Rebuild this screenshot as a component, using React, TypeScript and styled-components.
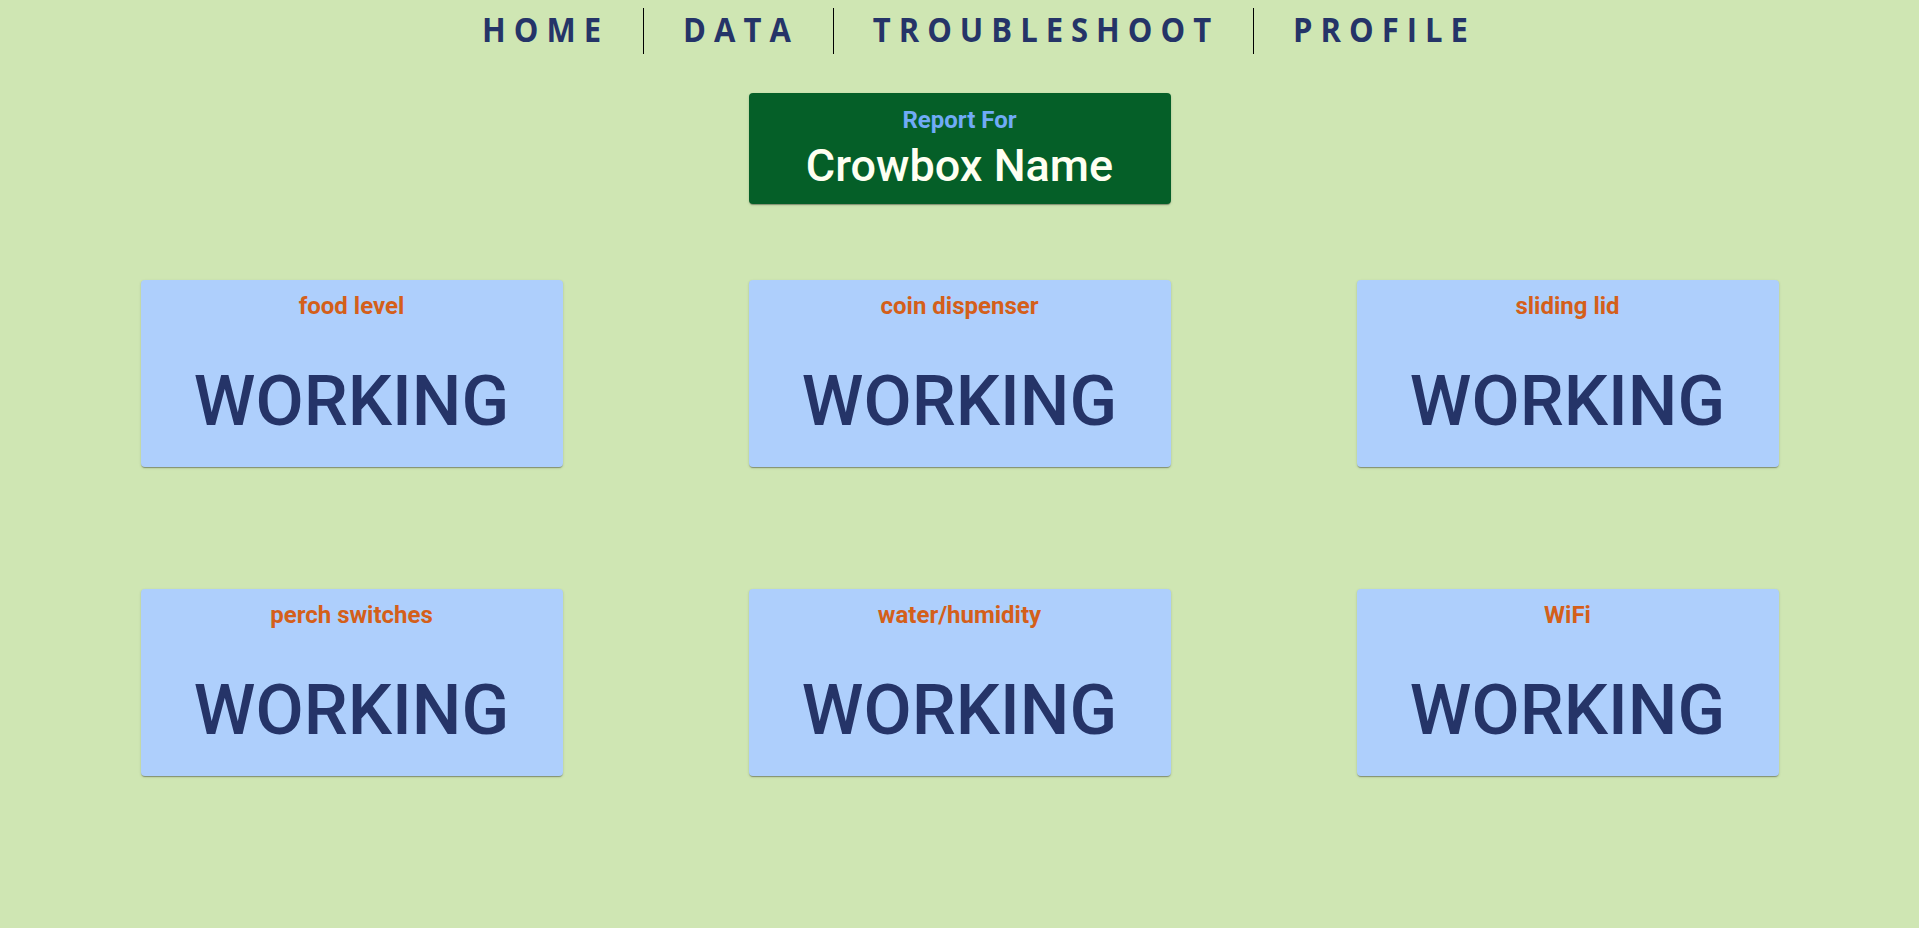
import styled, { createGlobalStyle } from 'styled-components';

const GlobalStyle = createGlobalStyle`
  body {
    margin: 0;
    background-color: #cfe6b3;
    font-family: Roboto, 'Noto Sans', sans-serif;
  }
`;

const Page = styled.div`
  min-height: 100vh;
  background-color: #cfe6b3;
`;

const NavBar = styled.nav`
  display: flex;
  justify-content: center;
  align-items: center;
  padding: 8px 0 0 34px;
`;

const NavItem = styled.a<{ $divider?: boolean }>`
  display: flex;
  align-items: center;
  height: 46px;
  padding: 0 34px 0 39px;
  border-left: ${(p) => (p.$divider ? '1px solid #000000' : 'none')};
  color: #253468;
  text-decoration: none;
  cursor: pointer;
`;

const NavText = styled.span`
  display: inline-block;
  font-family: 'Open Sans', sans-serif;
  font-weight: 700;
  font-size: 31px;
  letter-spacing: 8px;
  transform: translateY(-2px) scaleY(1.12);
`;

const ReportBox = styled.div`
  width: 422px;
  height: 111px;
  box-sizing: border-box;
  margin: 39px auto 0;
  padding-top: 13px;
  display: flex;
  flex-direction: column;
  align-items: center;
  background-color: #055f28;
  border-radius: 4px;
  box-shadow: 0 2px 1px -1px rgba(0, 0, 0, 0.2), 0 1px 1px 0 rgba(0, 0, 0, 0.14),
    0 1px 3px 0 rgba(0, 0, 0, 0.12);
`;

const ReportLabel = styled.div`
  font-size: 24px;
  font-weight: 700;
  line-height: 28px;
  color: #70abf6;
`;

const BoxName = styled.div`
  margin-top: 6px;
  font-size: 45px;
  font-weight: 500;
  line-height: 52px;
  color: #fffff2;
`;

const CardGrid = styled.div`
  display: grid;
  grid-template-columns: repeat(3, 422px);
  column-gap: 186px;
  row-gap: 122px;
  justify-content: center;
  margin-top: 76px;
`;

const StatusCard = styled.div`
  height: 187px;
  box-sizing: border-box;
  padding-top: 12px;
  display: flex;
  flex-direction: column;
  align-items: center;
  background-color: #aecffc;
  border-radius: 4px;
  box-shadow: 0 2px 1px -1px rgba(0, 0, 0, 0.2), 0 1px 1px 0 rgba(0, 0, 0, 0.14),
    0 1px 3px 0 rgba(0, 0, 0, 0.12);
`;

const CardTitle = styled.div`
  font-size: 24px;
  font-weight: 700;
  line-height: 28px;
  color: #d45f1a;
`;

const CardStatus = styled.div`
  margin-top: 40px;
  font-size: 70px;
  font-weight: 500;
  color: #253468;
`;

const links = ['HOME', 'DATA', 'TROUBLESHOOT', 'PROFILE'];

const parts = [
  'food level',
  'coin dispenser',
  'sliding lid',
  'perch switches',
  'water/humidity',
  'WiFi',
];

const App = () => {
  return (
    <Page>
      <GlobalStyle />
      <NavBar>
        {links.map((l, i) => (
          <NavItem key={l} $divider={i > 0}>
            <NavText>{l}</NavText>
          </NavItem>
        ))}
      </NavBar>
      <ReportBox>
        <ReportLabel>Report For</ReportLabel>
        <BoxName>Crowbox Name</BoxName>
      </ReportBox>
      <CardGrid>
        {parts.map((p) => (
          <StatusCard key={p}>
            <CardTitle>{p}</CardTitle>
            <CardStatus>WORKING</CardStatus>
          </StatusCard>
        ))}
      </CardGrid>
    </Page>
  );
};

export default App;
